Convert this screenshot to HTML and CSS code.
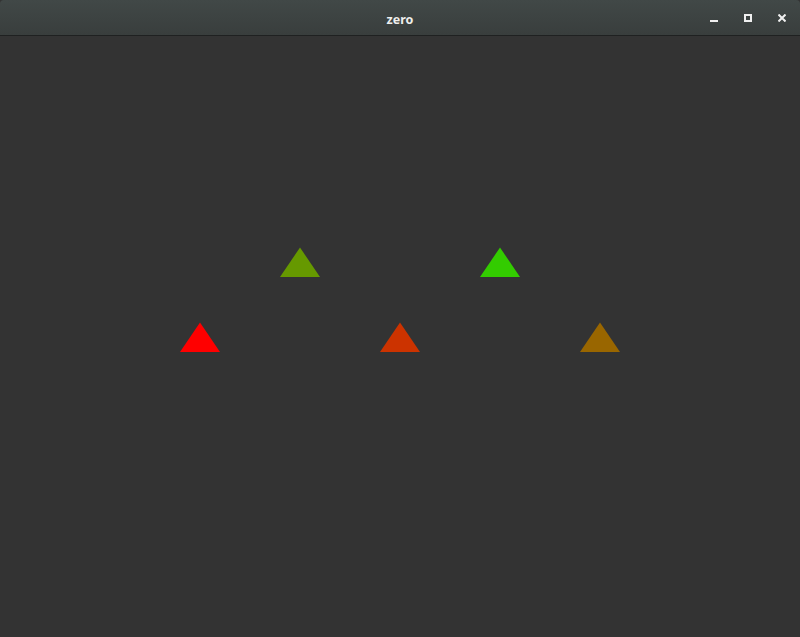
FILE: index.html
```html
<!DOCTYPE html>
<html>
<head>
<meta charset="utf-8">
<link rel="stylesheet" href="styles.css">
</head>
<body>
<div class="window">
  <div class="titlebar">
    <span class="title">zero</span>
    <div class="controls">
      <span class="btn min"><svg width="8" height="8" viewBox="0 0 8 8"><rect x="0" y="6" width="8" height="2" fill="#f0f0f0"/></svg></span>
      <span class="btn max"><svg width="8" height="8" viewBox="0 0 8 8"><rect x="1" y="1" width="6" height="6" fill="none" stroke="#f0f0f0" stroke-width="2"/></svg></span>
      <span class="btn close"><svg width="8" height="8" viewBox="0 0 8 8"><path d="M0.5 0.5 L7.5 7.5 M7.5 0.5 L0.5 7.5" stroke="#f0f0f0" stroke-width="2"/></svg></span>
    </div>
  </div>
  <div class="canvas">
    <svg class="scene" width="800" height="601" viewBox="0 36 800 601">
      <polygon points="300,247.5 280,277 320,277" fill="#669900"/>
      <polygon points="500,247.5 480,277 520,277" fill="#33cc00"/>
      <polygon points="200,322.5 180,352 220,352" fill="#ff0000"/>
      <polygon points="400,322.5 380,352 420,352" fill="#cc3300"/>
      <polygon points="600,322.5 580,352 620,352" fill="#996600"/>
    </svg>
  </div>
</div>
</body>
</html>
```
FILE: styles.css
```css
html, body {
  margin: 0;
  padding: 0;
  background: #333333;
  overflow: hidden;
}
.window {
  width: 800px;
  height: 637px;
  display: flex;
  flex-direction: column;
}
.titlebar {
  height: 35px;
  border-bottom: 1px solid #1f2121;
  background: linear-gradient(#414847, #393e3d);
  border-radius: 4px 4px 0 0;
  display: flex;
  align-items: center;
  justify-content: center;
  position: relative;
  flex: none;
}
.title {
  font-family: "Noto Sans", "DejaVu Sans", sans-serif;
  font-weight: bold;
  font-size: 12.5px;
  color: #eeeeec;
  margin-top: 3px;
}
.controls {
  position: absolute;
  right: 14px;
  top: 14px;
  display: flex;
  gap: 26px;
}
.btn {
  width: 8px;
  height: 8px;
  display: block;
}
.btn svg {
  display: block;
}
.canvas {
  flex: 1;
  background: #333333;
}
.scene {
  display: block;
}
```
